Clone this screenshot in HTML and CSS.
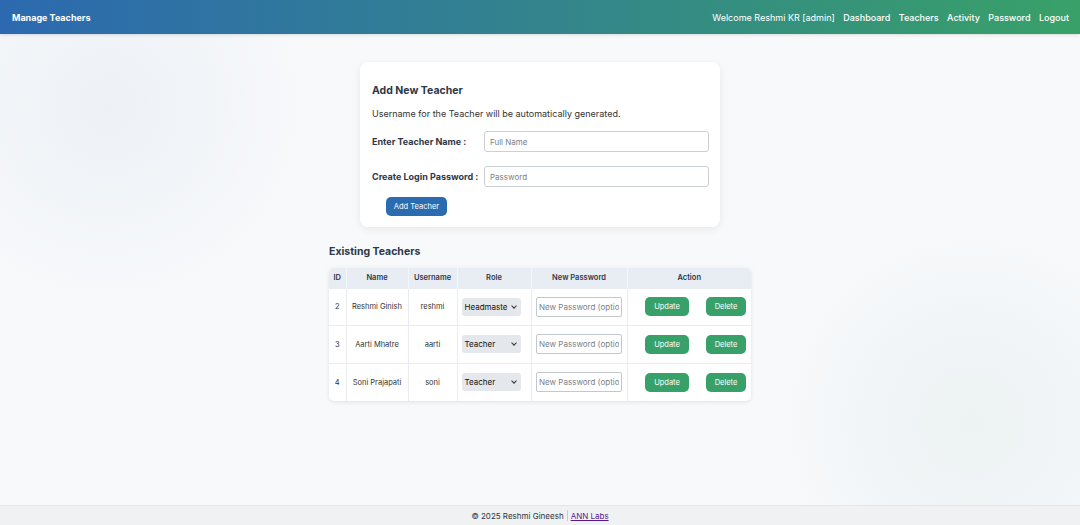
FILE: index.html
```html
<!DOCTYPE html>
<html lang="en">
<head>
  <meta charset="UTF-8">
  <meta name="viewport" content="width=device-width, initial-scale=1.0">
  <title>Manage Teachers</title>
  <link rel="stylesheet" href="styles.css">
</head>
<body>
  <div class="navbar">
    <div class="brand">Manage Teachers</div>
    <div class="nav-links">
      <span class="welcome">Welcome Reshmi KR [admin]</span>
      <a href="#">Dashboard</a>
      <a href="#">Teachers</a>
      <a href="#">Activity</a>
      <a href="#">Password</a>
      <a href="#">Logout</a>
    </div>
  </div>

  <div class="main">
    <div class="card">
      <h2>Add New Teacher</h2>
      <p class="note">Username for the Teacher will be automatically generated.</p>
      <form class="add-form">
        <label>Enter Teacher Name :</label>
        <input type="text" placeholder="Full Name">
        <label>Create Login Password :</label>
        <input type="password" placeholder="Password">
        <button type="button" class="btn btn-blue">Add Teacher</button>
      </form>
    </div>

    <div class="existing">
      <h2>Existing Teachers</h2>
      <table class="teachers">
        <thead>
          <tr>
            <th>ID</th>
            <th>Name</th>
            <th>Username</th>
            <th>Role</th>
            <th>New Password</th>
            <th>Action</th>
          </tr>
        </thead>
        <tbody>
          <tr>
            <td>2</td>
            <td>Reshmi Ginish</td>
            <td>reshmi</td>
            <td class="role"><div class="select">Headmaste</div></td>
            <td><input type="text" class="pw" placeholder="New Password (optional)"></td>
            <td class="actions"><button class="btn btn-green">Update</button><button class="btn btn-green">Delete</button></td>
          </tr>
          <tr>
            <td>3</td>
            <td>Aarti Mhatre</td>
            <td>aarti</td>
            <td class="role"><div class="select">Teacher</div></td>
            <td><input type="text" class="pw" placeholder="New Password (optional)"></td>
            <td class="actions"><button class="btn btn-green">Update</button><button class="btn btn-green">Delete</button></td>
          </tr>
          <tr>
            <td>4</td>
            <td>Soni Prajapati</td>
            <td>soni</td>
            <td class="role"><div class="select">Teacher</div></td>
            <td><input type="text" class="pw" placeholder="New Password (optional)"></td>
            <td class="actions"><button class="btn btn-green">Update</button><button class="btn btn-green">Delete</button></td>
          </tr>
        </tbody>
      </table>
    </div>
  </div>

  <div class="footer">
    &copy; 2025 Reshmi Gineesh <span class="sep"></span> <a href="#">ANN Labs</a>
  </div>
</body>
</html>
```

FILE: styles.css
```css
* {
  box-sizing: border-box;
}

body {
  margin: 0;
  font-family: Inter, "Noto Sans", sans-serif;
  color: #2d3748;
  height: 525px;
  display: flex;
  flex-direction: column;
  overflow: hidden;
  background-color: #f7f9fb;
  background-image:
    radial-gradient(circle at 108px 105px, #edf0f5 0, #f0f3f7 60px, rgba(247, 249, 251, 0) 200px),
    radial-gradient(circle at 972px 422px, #edf3f3 0, #f0f4f6 80px, rgba(247, 249, 251, 0) 190px);
}

.navbar {
  height: 34px;
  display: flex;
  justify-content: space-between;
  align-items: center;
  padding: 0 11px 0 12px;
  background: linear-gradient(90deg, #2c69b0 0%, #33848d 50%, #38a168 100%);
  color: white;
  box-shadow: 0 1px 3px rgba(0, 0, 0, 0.12);
  flex-shrink: 0;
}

.brand {
  font-size: 9px;
  font-weight: 700;
}

.nav-links {
  display: flex;
  gap: 8.5px;
  font-size: 9px;
}

.nav-links a {
  color: white;
  text-decoration: none;
  font-weight: 500;
}

.main {
  flex: 1;
  display: flex;
  flex-direction: column;
  align-items: center;
  padding-top: 28px;
}

.card {
  width: 360px;
  background: white;
  border-radius: 8px;
  box-shadow: 0 2px 8px rgba(0, 0, 0, 0.07);
  padding: 22px 11px 11px 12px;
}

.card h2 {
  margin: 0 0 11px;
  font-size: 10.5px;
  font-weight: 700;
}

.note {
  margin: 0 0 12px;
  font-size: 9px;
  color: #333;
}

.add-form {
  display: grid;
  grid-template-columns: 112px 1fr;
  row-gap: 14px;
  align-items: center;
}

.add-form label {
  font-size: 9px;
  font-weight: 700;
  color: #2d3748;
  white-space: nowrap;
}

.add-form input {
  height: 21px;
  border: 1px solid #cbd0d6;
  border-radius: 3px;
  padding: 0 5px;
  font-family: inherit;
  font-size: 8px;
}

.add-form input::placeholder,
.pw::placeholder {
  color: #7a7f87;
}

.btn {
  border: none;
  border-radius: 5px;
  color: white;
  font-family: inherit;
  font-size: 7.5px;
  cursor: pointer;
}

.btn-blue {
  grid-column: 1;
  justify-self: start;
  margin: -4px 0 0 14px;
  width: 61px;
  height: 19px;
  background: #2b6cb0;
}

.existing {
  width: 422px;
  margin-top: 18px;
}

.existing h2 {
  margin: 0 0 10px;
  font-size: 10.5px;
  font-weight: 700;
}

.teachers {
  width: 100%;
  border-collapse: collapse;
  background: white;
  border-radius: 5px;
  overflow: hidden;
  box-shadow: 0 1px 4px rgba(0, 0, 0, 0.1);
  font-size: 7.5px;
}

.teachers th {
  background: #e8edf3;
  height: 20px;
  font-weight: 600;
  color: #2d3748;
  border-left: 1px solid #f3f5f8;
  white-space: nowrap;
}

.teachers td {
  height: 37.5px;
  text-align: center;
  color: #333;
  border-top: 1px solid #e9edf2;
  border-left: 1px solid #e9edf2;
  padding: 0 2px;
  white-space: nowrap;
}

.teachers th:first-child,
.teachers td:first-child {
  border-left: none;
  width: 17px;
  padding: 0;
}

.teachers th:nth-child(2) { width: 62px; }
.teachers th:nth-child(3) { width: 49px; }
.teachers th:nth-child(4) { width: 74px; }
.teachers th:nth-child(5) { width: 96px; }

.teachers td.role {
  text-align: left;
  padding-left: 4px;
}

.select {
  display: inline-block;
  vertical-align: middle;
  width: 59px;
  height: 18px;
  background: #e4e7eb;
  border-radius: 3px;
  text-align: left;
  padding-left: 3px;
  line-height: 18px;
  font-size: 8px;
  color: #111;
  position: relative;
  overflow: hidden;
  white-space: nowrap;
}

.select::after {
  content: "";
  position: absolute;
  right: 5px;
  top: 6px;
  width: 3px;
  height: 3px;
  border-right: 1px solid #333;
  border-bottom: 1px solid #333;
  transform: rotate(45deg);
  background: #e4e7eb;
  box-shadow: 2px 2px 0 3px #e4e7eb;
}

.pw {
  width: 86px;
  height: 20px;
  border: 1px solid #c3c8cf;
  border-radius: 2px;
  padding: 0 2px;
  font-family: inherit;
  font-size: 8px;
}

.teachers td.actions {
  text-align: right;
  padding-right: 5px;
}

.actions .btn {
  height: 19px;
  background: #38a169;
}

.actions .btn:first-child {
  width: 44px;
  margin-right: 17px;
}

.actions .btn:last-child {
  width: 40px;
}

.footer {
  height: 20px;
  flex-shrink: 0;
  background: #f0f1f3;
  border-top: 1px solid #e4e6e9;
  display: flex;
  justify-content: center;
  align-items: center;
  gap: 3px;
  font-size: 8px;
  color: #333;
}

.sep {
  display: inline-block;
  width: 1px;
  height: 11px;
  background: #c8ccd1;
}

.footer a {
  color: #551a8b;
}
```
